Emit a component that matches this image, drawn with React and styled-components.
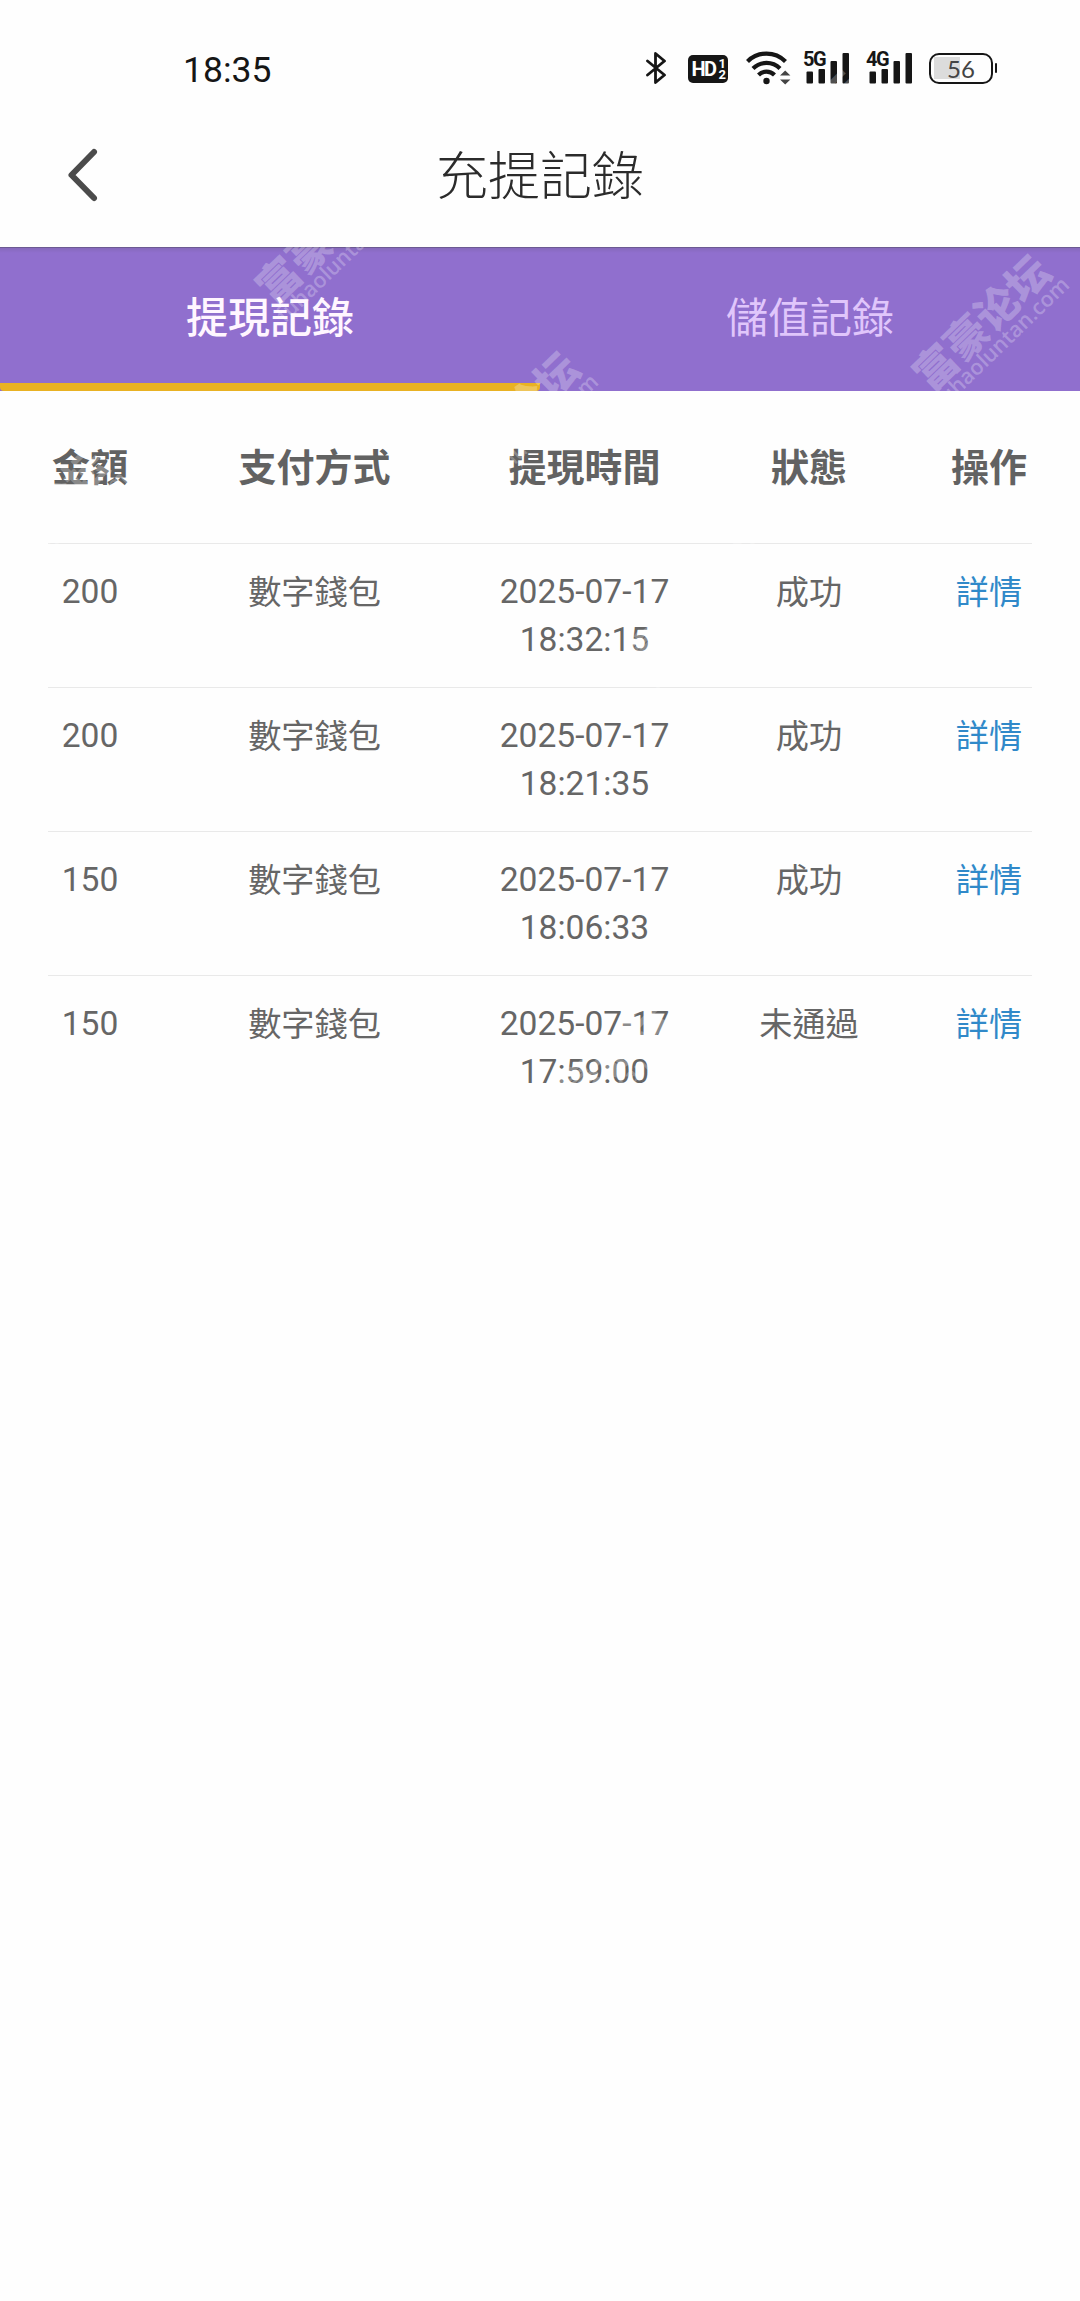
import React, { useState } from 'react'
import styled, { createGlobalStyle } from 'styled-components'

const GlobalStyle = createGlobalStyle`
  body {
    margin: 0;
    background-color: #fefefe;
    font-family: Roboto, "Noto Sans CJK TC", sans-serif;
  }
`
const Container = styled.div`
  position: relative;
  width: 1080px;
  height: 2301px;
  overflow: hidden;
  background-color: #fefefe;
`
const StatusBar = styled.div`
  display: flex;
  justify-content: space-between;
  align-items: center;
  height: 106px;
  padding: 32px 87px 0 183px;
  box-sizing: border-box;
`
const Clock = styled.div`
  padding-top: 2px;
  font-size: 35.5px;
  line-height: 40px;
  color: #161616;
`
const StatusIcons = styled.div`
  display: flex;
  align-items: flex-start;
  height: 36px;
  svg {
    display: block;
  }
`
const Bluetooth = styled.svg`
  margin-right: 22px;
`
const HdBadge = styled.div`
  display: flex;
  align-items: center;
  justify-content: center;
  width: 40px;
  height: 28px;
  margin: 4px 18px 0 0;
  border-radius: 5px;
  background-color: #161616;
  color: #fff;
  font-size: 20px;
  line-height: 28px;
  font-weight: 700;
  letter-spacing: -1.5px;
`
const HdLines = styled.div`
  display: flex;
  flex-direction: column;
  margin-left: 3px;
  font-size: 13px;
  line-height: 11px;
`
const Wifi = styled.svg`
  margin-right: 12px;
`
const Signal = styled.div`
  position: relative;
  width: 47px;
  height: 34px;
  margin-right: 16px;
`
const SignalLabel = styled.span`
  position: absolute;
  left: 0;
  top: -1px;
  font-size: 20px;
  line-height: 18px;
  font-weight: 700;
  letter-spacing: -1.5px;
  color: #161616;
`
const Battery = styled.div`
  position: relative;
  display: flex;
  align-items: center;
  justify-content: center;
  width: 64px;
  height: 31px;
  margin-top: 2px;
  box-sizing: border-box;
  border: 2.5px solid #161616;
  border-radius: 10px;
  font-family: Lato, sans-serif;
  font-size: 24px;
  line-height: 26px;
  color: #444;
  background: linear-gradient(#dcdcdc, #dcdcdc) 3px 2px / 26px 22px no-repeat;
  &::after {
    content: "";
    position: absolute;
    right: -6px;
    top: 8px;
    width: 2.5px;
    height: 10px;
    border-radius: 1px;
    background-color: #161616;
  }
`
const Header = styled.header`
  display: grid;
  grid-template-columns: 160px 1fr 160px;
  align-items: center;
  height: 142px;
  box-sizing: border-box;
  border-bottom: 1px solid #6c5a92;
`
const BackButton = styled.button`
  display: flex;
  padding: 0 0 3px 65px;
  border: none;
  background: none;
  cursor: pointer;
`
const Title = styled.h1`
  margin: 0;
  padding-top: 3px;
  font-size: 52px;
  line-height: 60px;
  font-weight: 300;
  text-align: center;
  color: #2b2b2b;
`
const Tabs = styled.div`
  display: flex;
  height: 143px;
  background: linear-gradient(#8669bc, #906fce 5px);
`
const Tab = styled.button`
  flex: 1;
  padding: 0 0 2px;
  border: none;
  border-bottom: 8px solid ${props => props.$active ? '#e9b223' : 'transparent'};
  border-radius: 4px;
  background: none;
  font-family: inherit;
  font-size: 42px;
  font-weight: ${props => props.$active ? 500 : 400};
  color: ${props => props.$active ? '#fff6ff' : '#e0c6fb'};
  cursor: pointer;
`
const Table = styled.div`
  margin: 0 48px;
`
const Row = styled.div`
  display: grid;
  grid-template-columns: 84px 365px 175px 274px 86px;
  padding: 24px 0 23px;
  border-bottom: ${props => props.$last ? 'none' : '1px solid #e9e9e9'};
  font-size: 33.6px;
  line-height: 48px;
  text-align: center;
  color: #666;
`
const HeadRow = styled(Row)`
  align-items: center;
  height: 153px;
  padding: 1px 0 0;
  box-sizing: border-box;
  font-size: 38px;
  font-weight: 700;
  color: #626262;
`
const Cell = styled.div`
  white-space: nowrap;
`
const TextCell = styled(Cell)`
  padding-top: 1px;
  line-height: 47px;
  font-size: 33.2px;
`
const Time = styled(Cell)`
  white-space: normal;
`
const Detail = styled.a`
  color: #3089c9;
  cursor: pointer;
`
const Marks = styled.div`
  position: absolute;
  inset: 0;
  pointer-events: none;
`
const Mark = styled.div`
  position: absolute;
  width: 200px;
  margin-left: -104px;
  margin-top: -24px;
  transform: rotate(-44deg);
  transform-origin: 100px 25px;
  font-family: "Noto Sans CJK SC", sans-serif;
  font-size: 42.5px;
  line-height: 50px;
  font-weight: 900;
  text-align: center;
  white-space: nowrap;
  color: rgba(255, 255, 255, 0.26);
`
const Domain = styled.div`
  margin-top: -9px;
  font-family: "Open Sans", sans-serif;
  font-size: 21.5px;
  line-height: 28px;
  font-weight: 600;
`

const heads = ['金額', '支付方式', '提現時間', '狀態', '操作']
const tabs = ['提現記錄', '儲值記錄']
const records = [
  { amount: 200, method: '數字錢包', time: '2025-07-17 18:32:15', status: '成功' },
  { amount: 200, method: '數字錢包', time: '2025-07-17 18:21:35', status: '成功' },
  { amount: 150, method: '數字錢包', time: '2025-07-17 18:06:33', status: '成功' },
  { amount: 150, method: '數字錢包', time: '2025-07-17 17:59:00', status: '未通過' },
]
// centre points of the repeated site mark
const marks = [
  [798, 136], [984, 320], [513, 417], [327, 233], [42, 514], [699, 601], [600, 1066],
]

function SignalBars({ label }) {
  return (
    <Signal>
      <svg width="47" height="34" viewBox="0 0 47 34" fill="#161616">
        <rect x="3.5" y="20.5" width="6.5" height="12" rx="1" />
        <rect x="15.5" y="18" width="6.5" height="14.5" rx="1" />
        <rect x="27.5" y="10" width="6.5" height="22.5" rx="1" />
        <rect x="39.5" y="2" width="6.5" height="30.5" rx="1" />
      </svg>
      <SignalLabel>{label}</SignalLabel>
    </Signal>
  )
}

function App() {
  const [tab, setTab] = useState(0)

  return (
    <>
      <GlobalStyle />
      <Container>
        <StatusBar>
          <Clock>18:35</Clock>
          <StatusIcons>
            <Bluetooth width="20" height="34" viewBox="0 0 20 34" fill="none" stroke="#161616" strokeWidth="2.8" strokeLinejoin="round" strokeLinecap="round">
              <path d="M1.5 10 L18.5 24 L9.5 31.5 V2.5 L18.5 10 L1.5 24" />
            </Bluetooth>
            <HdBadge>
              HD
              <HdLines>
                <span>1</span>
                <span>2</span>
              </HdLines>
            </HdBadge>
            <Wifi width="45" height="35" viewBox="0 0 45 35" fill="none" stroke="#161616" strokeWidth="4.2">
              <path d="M1.5 10.5 C12 0 29 0 39.5 10.5" />
              <path d="M7 17.5 C14.5 10 26.5 10 34 17.5" />
              <path d="M12.5 24 C17 19.5 24 19.5 28.5 24" />
              <circle cx="20.5" cy="30" r="3.2" fill="#161616" stroke="none" />
              <path d="M34 24.5 L39.2 19.5 L44.4 24.5 Z M34 28.5 L39.2 33.5 L44.4 28.5 Z" fill="#444" stroke="none" />
            </Wifi>
            <SignalBars label="5G" />
            <SignalBars label="4G" />
            <Battery>56</Battery>
          </StatusIcons>
        </StatusBar>
        <Header>
          <BackButton>
            <svg width="34" height="56" viewBox="0 0 34 56" fill="none" stroke="#4b4b4b" strokeWidth="6" strokeLinecap="round" strokeLinejoin="round">
              <path d="M29 5 L6.5 28 L29 51" />
            </svg>
          </BackButton>
          <Title>充提記錄</Title>
        </Header>
        <Tabs>
          {
            tabs.map((name, i) => (
              <Tab key={name} $active={tab === i} onClick={() => { setTab(i) }}>{name}</Tab>
            ))
          }
        </Tabs>
        <Table>
          <HeadRow>
            {heads.map((head) => <Cell key={head}>{head}</Cell>)}
          </HeadRow>
          {
            records.map((item, i) => (
              <Row key={item.time} $last={i === records.length - 1}>
                <Cell>{item.amount}</Cell>
                <TextCell>{item.method}</TextCell>
                <Time>{item.time}</Time>
                <TextCell>{item.status}</TextCell>
                <TextCell><Detail>詳情</Detail></TextCell>
              </Row>
            ))
          }
        </Table>
        <Marks>
          {
            marks.map(([x, y]) => (
              <Mark key={`${x}-${y}`} style={{ left: x, top: y }}>
                富豪论坛
                <Domain>fuhaoluntan.com</Domain>
              </Mark>
            ))
          }
        </Marks>
      </Container>
    </>
  )
}

export default App
